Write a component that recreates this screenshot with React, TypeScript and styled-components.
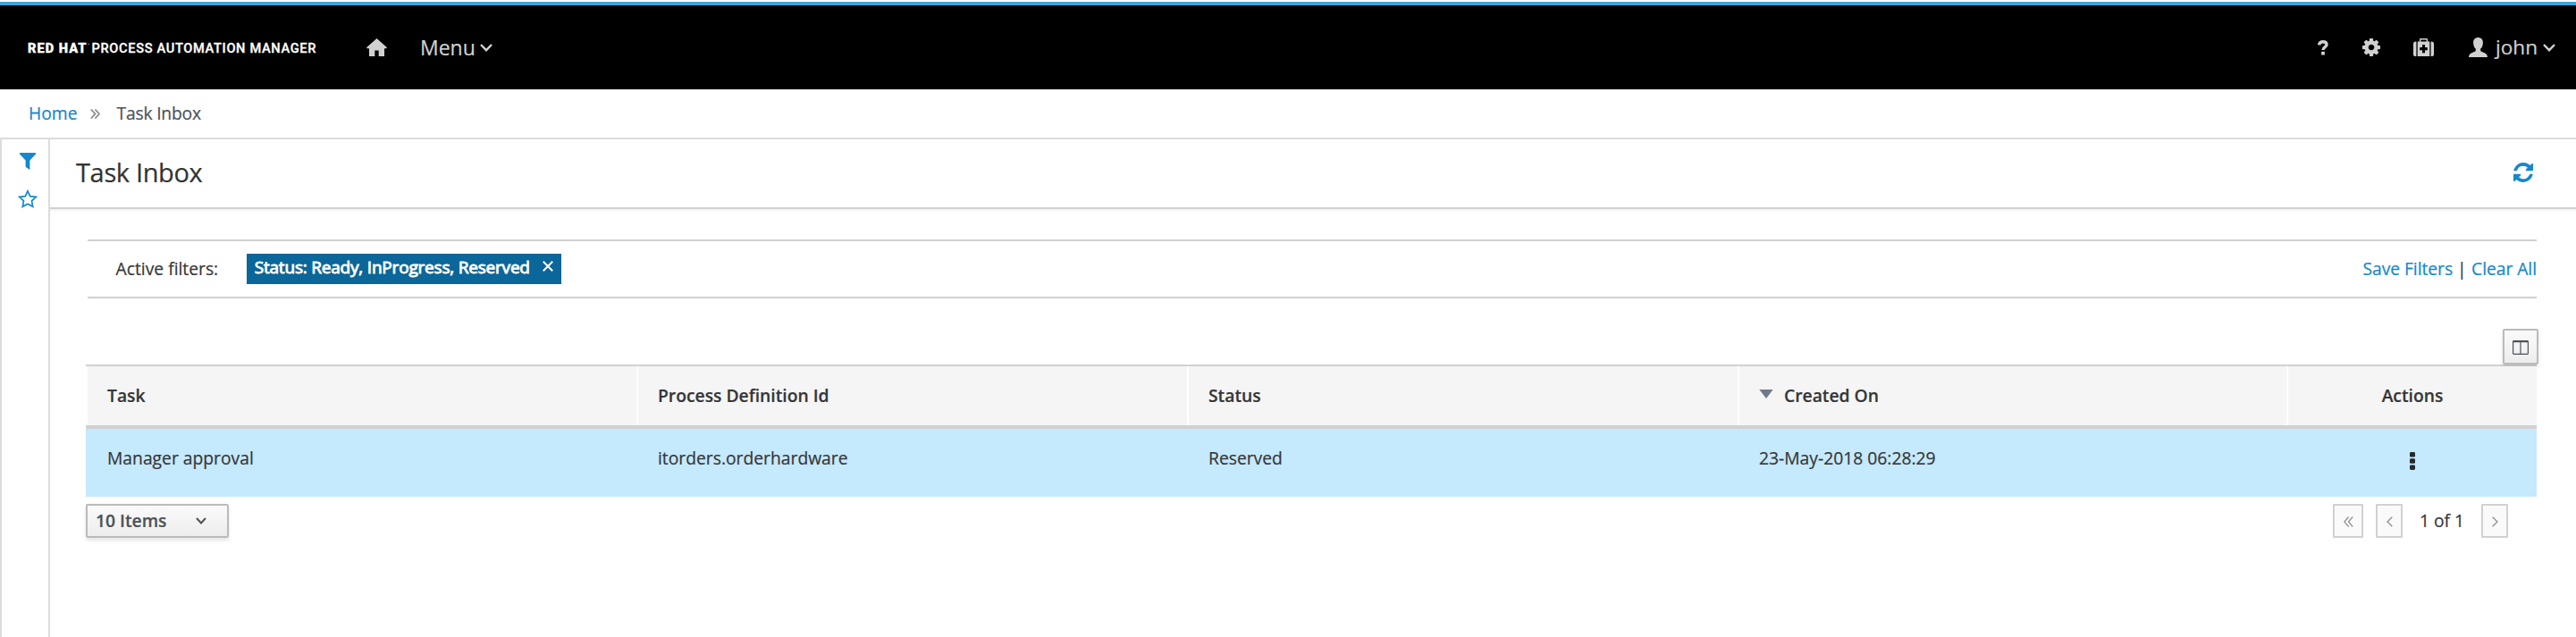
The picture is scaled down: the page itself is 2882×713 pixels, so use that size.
import React from 'react';
import styled, { createGlobalStyle } from 'styled-components';

const c = {
  accent: '#39a5dc',
  link: '#1488ce',
  text: '#363636',
  line: '#d1d1d1',
  nav: '#d1d1d1',
  tag: '#0b6699',
};

const GlobalStyle = createGlobalStyle`
  * { box-sizing: border-box; }
  body {
    margin: 0;
    background: #fff;
    color: ${c.text};
    font: 400 19.3px/34px "Open Sans", sans-serif;
    -webkit-text-stroke-width: 0.2px;
    white-space: nowrap;
  }
  svg { display: block; flex: none; }
  button { font: inherit; color: inherit; padding: 0; cursor: pointer; }
  a { color: ${c.link}; text-decoration: none; }
`;

const Page = styled.div`
  display: flex;
  flex-direction: column;
  height: 713px;
  padding-top: 2px;
`;

/* ---------- masthead ---------- */

const Masthead = styled.header`
  display: flex;
  align-items: center;
  justify-content: space-between;
  height: 98px;
  padding: 0 23px 0 31px;
  border-top: 4px solid ${c.accent};
  background: #000;
  color: ${c.nav};
`;

const NavGroup = styled.nav`
  display: flex;
  align-items: center;
`;

const Brand = styled.div`
  display: flex;
  width: 378px;
  padding-top: 1px;
  color: #fff;
  font-family: Roboto, sans-serif;
  font-size: 14.6px;
  line-height: 34px;
  -webkit-text-stroke-width: 0.3px;
`;

const BrandStrong = styled.span`
  width: 67px;
  font-weight: 900;
  letter-spacing: 1px;
`;

const BrandMark = styled.span`
  width: 4.5px;
  color: #777;
  font-size: 3px;
  line-height: 26px;
`;

const BrandName = styled.span`
  font-weight: 500;
  letter-spacing: 0.67px;
`;

const NavText = styled.span<{ $size: number }>`
  font-size: ${(p) => p.$size}px;
  line-height: 34px;
`;

const NavItem = styled.a<{ $before: number; $gap?: number }>`
  display: flex;
  align-items: center;
  gap: ${(p) => p.$gap ?? 0}px;
  margin-left: ${(p) => p.$before}px;
  color: ${c.nav};
`;

/* ---------- breadcrumb ---------- */

const Breadcrumb = styled.nav`
  display: flex;
  align-items: center;
  height: 56px;
  padding: 0 0 1px 32px;
  border-bottom: 2px solid #dcdcdc;
  color: #4d5258;
`;

const Separator = styled.span`
  display: flex;
  margin: 2px 19px 0 14px;
`;

const Crumb = styled.span`
  letter-spacing: -0.2px;
`;

/* ---------- body ---------- */

const Body = styled.div`
  display: flex;
  flex: 1;
`;

const Sidebar = styled.aside`
  display: flex;
  flex-direction: column;
  align-items: center;
  gap: 22px;
  width: 56px;
  padding: 15px 0 0 6px;
  border: solid #dcdcdc;
  border-width: 0 2px;
`;

const Main = styled.main`
  flex: 1;
`;

const TitleBar = styled.div`
  display: flex;
  align-items: center;
  justify-content: space-between;
  height: 78px;
  padding: 0 48px 2px 29px;
  border-bottom: 2px solid ${c.line};
  box-shadow: 0 2px 0 #f5f5f5;
`;

const Title = styled.h1`
  margin: 0;
  color: #333;
  font-size: 29px;
  font-weight: 400;
  letter-spacing: -0.35px;
  line-height: 40px;
`;

const Content = styled.section`
  padding: 34px 42px 0 40px;
`;

const FilterBar = styled.div`
  display: flex;
  align-items: center;
  height: 66px;
  margin: 0 2px;
  padding-left: 31.5px;
  border: solid ${c.line};
  border-width: 2px 0;
`;

const FilterTag = styled.span`
  display: flex;
  justify-content: space-between;
  width: 352px;
  height: 34px;
  margin-left: 31.5px;
  padding: 0 9px;
  background: ${c.tag};
  color: #fff;
  font-size: 19px;
  line-height: 30px;
  letter-spacing: -0.2px;
  -webkit-text-stroke-width: 0.9px;

  svg { margin-top: 8px; }
`;

const FilterActions = styled.div`
  display: flex;
  gap: 8px;
  margin-left: auto;
  letter-spacing: -0.05px;
`;

const Divider = styled.span`
  width: 5px;
  text-indent: -3px;
`;

const TableTools = styled.div`
  display: flex;
  justify-content: flex-end;
  padding-top: 34px;
`;

const RaisedButton = styled.button<{ $width: number }>`
  display: flex;
  align-items: center;
  width: ${(p) => p.$width}px;
  border: 2px solid #bbb;
  border-radius: 2px;
  background: linear-gradient(#fafafa, #ededed);
  box-shadow: 0 3px 4px rgba(3, 3, 3, 0.1);
`;

const ColumnsButton = styled(RaisedButton)`
  justify-content: center;
  height: 40px;
  padding: 2px 0 0 0;
`;

/* ---------- table ---------- */

const columns = '616fr 616fr 616fr 614fr 280px';

const Table = styled.div`
  margin-right: 2px;
`;

const HeadRow = styled.div`
  display: grid;
  grid-template-columns: ${columns};
  height: 72px;
  border-top: 2px solid ${c.line};
  border-bottom: 4px solid ${c.line};
`;

const HeadCell = styled.div<{ $center?: boolean }>`
  display: flex;
  align-items: center;
  justify-content: ${(p) => (p.$center ? 'center' : 'flex-start')};
  padding: 0 ${(p) => (p.$center ? 0 : 22)}px 1px;
  border-left: 2px solid #fff;
  background: #f5f5f5;
  font-weight: 600;

  svg { margin: -4px 12px 0 0; }
`;

const Row = styled.div`
  display: grid;
  grid-template-columns: ${columns};
  height: 76px;
  background: #c5e9fd;
`;

const Cell = styled.div`
  padding: 16px 24px 0;
`;

const KebabCell = styled.div`
  display: flex;
  justify-content: center;
  padding: 26px 0 0 2px;
`;

/* ---------- footer ---------- */

const Footer = styled.div`
  display: flex;
  justify-content: space-between;
  padding: 8px 34px 0 0;
`;

const PageSize = styled(RaisedButton)`
  justify-content: space-between;
  height: 38px;
  padding: 0 23px 0 9px;
  color: #4d5258;
  font-weight: 600;
`;

const Pager = styled.div`
  display: flex;
  align-items: center;
`;

const PageButton = styled.button<{ $wide?: boolean }>`
  display: flex;
  align-items: center;
  justify-content: center;
  width: ${(p) => (p.$wide ? 34 : 30)}px;
  height: 38px;
  margin-right: ${(p) => (p.$wide ? 14 : 0)}px;
  padding-top: 1px;
  border: 2px solid ${c.line};
  border-radius: 1px;
  background: #fafafa;
`;

const PageStatus = styled.span`
  width: 88px;
  text-align: center;
`;

/* ---------- icons ---------- */

const Chevron = ({ w, h, stroke }: { w: number; h: number; stroke: number }) => (
  <svg width={w} height={h} viewBox={`0 0 ${w} ${h}`} fill="none" stroke="currentColor" strokeWidth={stroke}>
    <path d={`M1 1L${w / 2} ${h - stroke * 0.75}L${w - 1} 1`} />
  </svg>
);

const HomeIcon = () => (
  <svg width="23" height="20" viewBox="0 0 23 20" fill="currentColor">
    <path d="M11.5 0L23 10.2L22 11.2H20V20H13.7V13.4H9.3V20H3V11.2H1L0 10.2Z" />
  </svg>
);

const HelpIcon = () => (
  <svg width="12" height="17" viewBox="0 0 12 17">
    <path
      d="M1.6 5.4C1.9 2.9 3.6 1.8 6 1.8C8.4 1.8 10 3 10 5C10 7.9 6 7.5 6 11"
      fill="none"
      stroke="currentColor"
      strokeWidth="3.4"
    />
    <rect x="4.1" y="12.8" width="3.8" height="3.8" rx="0.5" fill="currentColor" />
  </svg>
);

const GearIcon = () => (
  <svg width="20" height="20" viewBox="0 128 1536 1536" fill="currentColor">
    <path d="M1024 896q0-106-75-181t-181-75-181 75-75 181 75 181 181 75 181-75 75-181zm512-109v222q0 12-8 23t-20 13l-185 28q-19 54-39 91 35 50 107 138 10 12 10 25t-9 23q-27 37-99 108t-94 71q-12 0-26-9l-138-108q-44 23-91 38-16 136-29 186-7 28-36 28h-222q-14 0-24.5-8.5t-11.5-21.5l-28-184q-49-16-90-37l-141 107q-10 9-25 9-14 0-25-11-126-114-165-168-7-10-7-23 0-12 8-23 15-21 51-66.5t54-70.5q-27-50-41-99l-183-27q-13-2-21-12.5t-8-23.5v-222q0-12 8-23t19-13l186-28q14-46 39-92-40-57-107-138-10-12-10-24 0-10 9-23 26-36 98.5-107.5t94.5-71.5q13 0 26 10l138 107q44-23 91-38 16-136 29-186 7-28 36-28h222q14 0 24.5 8.5t11.5 21.5l28 184q49 16 90 37l142-107q9-9 24-9 13 0 25 10 129 119 165 170 7 8 7 22 0 12-8 23-15 21-51 66.5t-54 70.5q26 50 41 98l183 28q13 2 21 12.5t8 23.5z" />
  </svg>
);

const MedkitIcon = () => (
  <svg width="23" height="20" viewBox="0 0 23 20" fill="currentColor">
    <path d="M3.4 3.4V20H2.6Q0 20 0 17.4V6Q0 3.4 2.6 3.4Z" />
    <path d="M19.6 3.4V20H20.4Q23 20 23 17.4V6Q23 3.4 20.4 3.4Z" />
    <path
      fillRule="evenodd"
      d="M4.7 3.4H6.9V1.2Q6.9 0 8.1 0H14.9Q16.1 0 16.1 1.2V3.4H18.3V20H4.7ZM8.3 3.4H14.7V1.4H8.3ZM10 7V10H7.2V13.2H10V16.2H13V13.2H15.8V10H13V7Z"
    />
  </svg>
);

const UserIcon = () => (
  <svg width="21" height="22" viewBox="0 0 21 22" fill="currentColor">
    <path d="M10.5 0C13.7 0 15.9 2.2 15.9 5.4C15.9 8.8 14.9 11.2 13.2 12.6V14.2C13.2 15.4 14 15.7 15.5 16.3C18.8 17.6 20.7 18.6 21 22H0C0.3 18.6 2.2 17.6 5.5 16.3C7 15.7 7.8 15.4 7.8 14.2V12.6C6.1 11.2 5.1 8.8 5.1 5.4C5.1 2.2 7.3 0 10.5 0Z" />
  </svg>
);

const DoubleAngle = ({ flip, w, h, stroke }: { flip?: boolean; w: number; h: number; stroke: number }) => (
  <svg width={w} height={h} viewBox="0 0 11 11" preserveAspectRatio="none" fill="none" stroke="#8b8d8f" strokeWidth={stroke}>
    <path
      d={flip ? 'M5.6 0.5L0.9 5.5L5.6 10.5M10.2 0.5L5.5 5.5L10.2 10.5' : 'M0.8 0.5L5.5 5.5L0.8 10.5M5.4 0.5L10.1 5.5L5.4 10.5'}
    />
  </svg>
);

const Angle = ({ left }: { left?: boolean }) => (
  <svg width="7" height="12" viewBox="0 0 7 12" fill="none" stroke="#8b8d8f" strokeWidth="1.3">
    <path d={left ? 'M6.3 0.7L1 6L6.3 11.3' : 'M0.7 0.7L6 6L0.7 11.3'} />
  </svg>
);

const FilterIcon = () => (
  <svg width="18" height="19" viewBox="0 0 18 19" fill={c.link}>
    <path d="M0 0H18V1.4L11.4 8.6V18Q11.4 19 10.4 18.5L7.2 16.2Q6.6 15.8 6.6 15V8.6L0 1.4Z" />
  </svg>
);

const StarIcon = () => (
  <svg width="22" height="21" viewBox="0 0 22 21" fill="none" stroke={c.link} strokeWidth="1.7">
    <path d="M11 1.8L13.7 7.6L20.2 8.4L15.5 12.8L16.7 19.3L11 16.2L5.3 19.3L6.5 12.8L1.8 8.4L8.3 7.6Z" />
  </svg>
);

const RefreshIcon = () => (
  <svg width="22" height="22" viewBox="128 128 1536 1536" fill={c.link}>
    <path d="M1639 1056q0 5-1 7-64 268-268 434.5t-478 166.5q-146 0-282.5-55t-243.5-157l-129 129q-19 19-45 19t-45-19-19-45v-448q0-26 19-45t45-19h448q26 0 45 19t19 45-19 45l-137 137q71 66 161 102t187 36q134 0 250-65t186-179q11-17 53-117 8-23 30-23h192q13 0 22.5 9.5t9.5 22.5zm25-800v448q0 26-19 45t-45 19h-448q-26 0-45-19t-19-45 19-45l138-138q-148-137-349-137-134 0-250 65t-186 179q-11 17-53 117-8 23-30 23h-199q-13 0-22.5-9.5t-9.5-22.5v-7q65-268 270-434.5t480-166.5q146 0 284 55.5t245 156.5l130-129q19-19 45-19t45 19 19 45z" />
  </svg>
);

const CloseIcon = () => (
  <svg width="12" height="12" viewBox="0 0 12 12" fill="none" stroke="#fff" strokeWidth="2">
    <path d="M0.8 0.8L11.2 11.2M11.2 0.8L0.8 11.2" />
  </svg>
);

const ColumnsIcon = () => (
  <svg width="18" height="16" viewBox="0 0 18 16" fill="none" stroke="#4d5258" strokeWidth="1.2">
    <rect x="0.6" y="0.6" width="16.8" height="14.8" rx="1" />
    <path d="M0.6 1.2H17.4" strokeWidth="2" />
    <path d="M9 1V15.4" />
  </svg>
);

const SortIcon = () => (
  <svg width="16" height="10" viewBox="0 0 16 10" fill="#6f7b8a">
    <path d="M0.3 0H15.7L8 10Z" />
  </svg>
);

const KebabIcon = () => (
  <svg width="6" height="20" viewBox="0 0 6 20" fill="#292929">
    <rect width="6" height="5.6" rx="1.4" />
    <rect y="7.2" width="6" height="5.6" rx="1.4" />
    <rect y="14.4" width="6" height="5.6" rx="1.4" />
  </svg>
);

const tasks = [
  { name: 'Manager approval', process: 'itorders.orderhardware', status: 'Reserved', created: '23-May-2018 06:28:29' },
];

export default function App() {
  return (
    <Page>
      <GlobalStyle />
      <Masthead>
        <NavGroup>
          <Brand>
            <BrandStrong>RED HAT</BrandStrong>
            <BrandMark>™</BrandMark>
            <BrandName>PROCESS AUTOMATION MANAGER</BrandName>
          </Brand>
          <NavItem $before={0.5}>
            <HomeIcon />
          </NavItem>
          <NavItem $before={37.5} $gap={5.5}>
            <NavText $size={23}>Menu</NavText>
            <Chevron w={14} h={9} stroke={2.4} />
          </NavItem>
        </NavGroup>
        <NavGroup>
          <NavItem $before={0}>
            <HelpIcon />
          </NavItem>
          <NavItem $before={38}>
            <GearIcon />
          </NavItem>
          <NavItem $before={37}>
            <MedkitIcon />
          </NavItem>
          <NavItem $before={39} $gap={9}>
            <UserIcon />
            <NavItem $before={0} $gap={6}>
              <NavText $size={22.6}>john</NavText>
              <Chevron w={14} h={9} stroke={2.4} />
            </NavItem>
          </NavItem>
        </NavGroup>
      </Masthead>

      <Breadcrumb>
        <a>Home</a>
        <Separator>
          <DoubleAngle w={11} h={11} stroke={1.8} />
        </Separator>
        <Crumb>Task Inbox</Crumb>
      </Breadcrumb>

      <Body>
        <Sidebar>
          <FilterIcon />
          <StarIcon />
        </Sidebar>
        <Main>
          <TitleBar>
            <Title>Task Inbox</Title>
            <RefreshIcon />
          </TitleBar>
          <Content>
            <FilterBar>
              <span>Active filters:</span>
              <FilterTag>
                Status: Ready, InProgress, Reserved
                <CloseIcon />
              </FilterTag>
              <FilterActions>
                <a>Save Filters</a>
                <Divider>|</Divider>
                <a>Clear All</a>
              </FilterActions>
            </FilterBar>

            <TableTools>
              <ColumnsButton $width={40} aria-label="Columns">
                <ColumnsIcon />
              </ColumnsButton>
            </TableTools>

            <Table>
              <HeadRow>
                <HeadCell>Task</HeadCell>
                <HeadCell>Process Definition Id</HeadCell>
                <HeadCell>Status</HeadCell>
                <HeadCell>
                  <SortIcon />
                  Created On
                </HeadCell>
                <HeadCell $center>Actions</HeadCell>
              </HeadRow>
              {tasks.map((t) => (
                <Row key={t.name}>
                  <Cell>{t.name}</Cell>
                  <Cell>{t.process}</Cell>
                  <Cell>{t.status}</Cell>
                  <Cell>{t.created}</Cell>
                  <KebabCell>
                    <KebabIcon />
                  </KebabCell>
                </Row>
              ))}
            </Table>

            <Footer>
              <PageSize $width={160}>
                10 Items
                <Chevron w={12} h={8} stroke={2} />
              </PageSize>
              <Pager>
                <PageButton $wide>
                  <DoubleAngle flip w={11} h={12} stroke={1.2} />
                </PageButton>
                <PageButton>
                  <Angle left />
                </PageButton>
                <PageStatus>1 of 1</PageStatus>
                <PageButton>
                  <Angle />
                </PageButton>
              </Pager>
            </Footer>
          </Content>
        </Main>
      </Body>
    </Page>
  );
}
